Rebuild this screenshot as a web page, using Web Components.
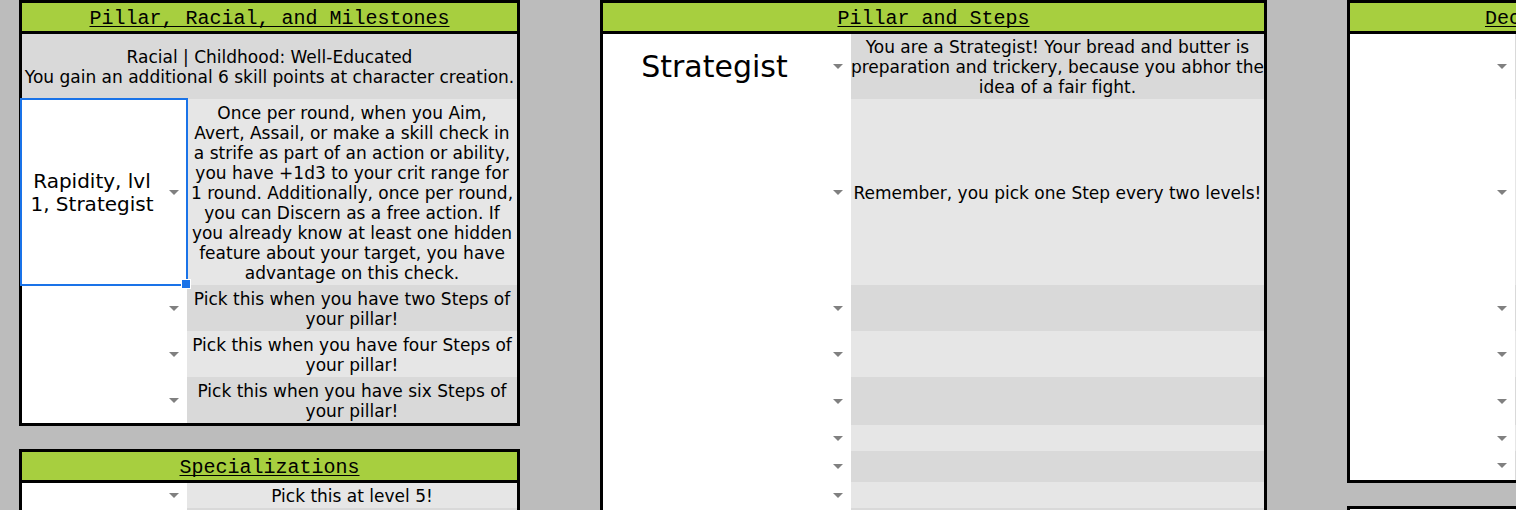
<!DOCTYPE html>
<html lang="en">
<head>
<meta charset="utf-8">
<meta name="viewport" content="width=device-width, initial-scale=1">
<title>Character sheet</title>
<style>
  body { margin: 0; background: #bcbcbc; }
</style>
</head>
<body>
<character-sheet>
  <sheet-panel slot="first" data-rows="milestones">Pillar, Racial, and Milestones</sheet-panel>
  <sheet-panel slot="first" data-rows="specializations">Specializations</sheet-panel>
  <sheet-panel slot="second" class="wide" data-rows="steps">Pillar and Steps</sheet-panel>
  <sheet-panel slot="third" class="cut" data-rows="third">Dec</sheet-panel>
  <sheet-panel slot="third" class="cut plain" data-rows="fourth"></sheet-panel>
</character-sheet>

<template id="character-sheet">
  <style>
    :host {
      display: grid;
      grid-template-columns: 501fr 667fr 169fr;
      column-gap: 80px;
      box-sizing: border-box;
      height: 100vh;
      padding-left: 19px;
      overflow: hidden;
      background: #bcbcbc;
      color: #000;
      font: 17px/20px "DejaVu Sans", Verdana, sans-serif;
      font-variant-ligatures: none;
    }
    .column { display: flex; flex-direction: column; gap: 23px; min-width: 0; }
  </style>
  <div class="column"><slot name="first"></slot></div>
  <div class="column"><slot name="second"></slot></div>
  <div class="column"><slot name="third"></slot></div>
</template>

<template id="sheet-panel">
  <style>
    :host { display: block; flex: none; border: 3px solid #000; --pick: 33.3333%; --inset: 0; --align: center; background: #fff; }
    :host(.wide) { --pick: 37.5%; }
    :host(.cut) { width: 495px; --inset: 135px; --align: left; }
    :host(.plain) h2 { display: none; }
    h2 {
      margin: 0;
      padding: 4px 0 0 var(--inset);
      border-bottom: 3px solid #000;
      background: #a7cf3f;
      text-align: var(--align);
      font: 20px/24px "Liberation Mono", "Courier New", monospace;
      text-decoration: underline;
      text-decoration-thickness: 1px;
      text-underline-offset: 2px;
      text-decoration-skip-ink: none;
    }
    table { width: 100%; table-layout: fixed; border-collapse: separate; border-spacing: 0; }
    col.pick { width: var(--pick); }
    td { padding: 0; text-align: center; vertical-align: middle; }
    td.text { padding: 3px 0 2px; background: #e6e6e6; }
    tr.dark td.text { background: #d9d9d9; }
    td.pick { position: relative; background: #fff; }
    .ring { position: absolute; inset: -1px -1px -1px -2px; border: 2px solid #1a73e8; pointer-events: none; z-index: 1; }
    .ring::after {
      content: "";
      position: absolute;
      right: -5px;
      bottom: -5px;
      width: 8px;
      height: 8px;
      border: 1px solid #fff;
      background: #1a73e8;
    }
  </style>
  <h2><slot></slot></h2>
  <table>
    <colgroup><col class="pick"><col></colgroup>
    <tbody></tbody>
  </table>
</template>

<template id="sheet-picker">
  <style>
    :host { display: grid; align-items: center; }
    select, button {
      grid-area: 1 / 1;
      appearance: none;
      box-sizing: border-box;
      width: 100%;
      height: 24px;
      margin: 0;
      border: 0;
      border-radius: 0;
      padding: 0 25px 0 0;
      background: transparent;
      color: inherit;
      font: inherit;
      text-align: center;
      text-align-last: center;
      outline: none;
    }
    :host(.large) select { height: 40px; font-size: 30px; line-height: 40px; }
    button { height: auto; padding: 2px 29px 0 4px; font-size: 20px; line-height: 23px; }
    svg { grid-area: 1 / 1; justify-self: end; margin-right: 8px; pointer-events: none; }
  </style>
  <svg width="10" height="5" viewBox="0 0 10 5" aria-hidden="true"><path d="M0 0h10L5 5z" fill="#808080"/></svg>
</template>

<script>
  const clone = id => document.getElementById(id).content.cloneNode(true);

  // Each row: height, dark shading, description lines, and the picked value.
  const ROWS = {
    milestones: [
      { height: 65, dark: true, full: true, text: "Racial | Childhood: Well-Educated\nYou gain an additional 6 skill points at character creation." },
      { height: 186, active: true, value: "Rapidity, lvl 1, Strategist", wrap: true, text: "Once per round, when you Aim,\nAvert, Assail, or make a skill check in\na strife as part of an action or ability,\nyou have +1d3 to your crit range for\n1 round. Additionally, once per round,\nyou can Discern as a free action. If\nyou already know at least one hidden\nfeature about your target, you have\nadvantage on this check." },
      { height: 46, dark: true, text: "Pick this when you have two Steps of your pillar!" },
      { height: 46, text: "Pick this when you have four Steps of your pillar!" },
      { height: 46, dark: true, text: "Pick this when you have six Steps of your pillar!" }
    ],
    specializations: [
      { height: 25, text: "Pick this at level 5!" },
      { height: 26, dark: true }
    ],
    steps: [
      { height: 65, dark: true, value: "Strategist", large: true, text: "You are a Strategist! Your bread and butter is preparation and trickery, because you abhor the idea of a fair fight." },
      { height: 186, text: "Remember, you pick one Step every two levels!" },
      { height: 46, dark: true },
      { height: 46 },
      { height: 48, dark: true },
      { height: 26 },
      { height: 31, dark: true },
      { height: 26 },
      { height: 26, dark: true }
    ],
    third: [
      { height: 65, dark: true },
      { height: 186 },
      { height: 46, dark: true },
      { height: 46 },
      { height: 48, dark: true },
      { height: 26 },
      { height: 29, dark: true }
    ],
    fourth: [{ height: 26 }]
  };

  customElements.define("character-sheet", class extends HTMLElement {
    constructor() {
      super();
      this.attachShadow({ mode: "open" }).append(clone("character-sheet"));
    }
  });

  customElements.define("sheet-picker", class extends HTMLElement {
    connectedCallback() {
      if (this.shadowRoot) return;
      const root = this.attachShadow({ mode: "open" });
      root.append(clone("sheet-picker"));
      const value = this.getAttribute("value") || "";
      let control;
      if (this.hasAttribute("wrap")) {
        // A native select keeps its value on one line, so long values use a button.
        control = document.createElement("button");
        control.type = "button";
        control.setAttribute("aria-haspopup", "listbox");
        control.textContent = value;
      } else {
        control = document.createElement("select");
        control.setAttribute("aria-label", "Choice");
        control.add(new Option(value, value));
      }
      root.querySelector("svg").before(control);
    }
  });

  customElements.define("sheet-panel", class extends HTMLElement {
    connectedCallback() {
      if (this.shadowRoot) return;
      const root = this.attachShadow({ mode: "open" });
      root.append(clone("sheet-panel"));
      const body = root.querySelector("tbody");
      for (const row of ROWS[this.dataset.rows]) {
        const tr = body.insertRow();
        tr.style.height = row.height + "px";
        if (row.dark) tr.className = "dark";
        if (!row.full) {
          const pick = tr.insertCell();
          pick.className = "pick";
          const picker = document.createElement("sheet-picker");
          if (row.value) picker.setAttribute("value", row.value);
          if (row.wrap) picker.setAttribute("wrap", "");
          if (row.large) picker.className = "large";
          pick.append(picker);
          if (row.active) {
            const ring = document.createElement("div");
            ring.className = "ring";
            pick.append(ring);
          }
        }
        const text = tr.insertCell();
        text.className = "text";
        if (row.full) text.colSpan = 2;
        (row.text || "").split("\n").forEach((line, i) => {
          if (i) text.append(document.createElement("br"));
          text.append(line);
        });
      }
    }
  });
</script>
</body>
</html>
